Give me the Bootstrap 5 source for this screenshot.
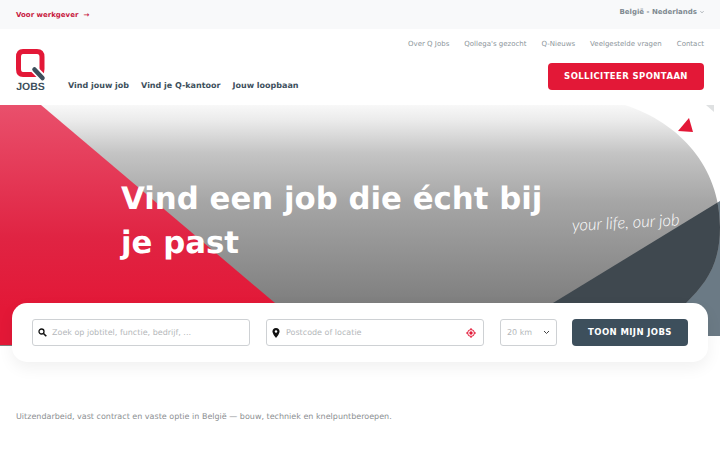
<!DOCTYPE html>
<html lang="nl">
<head>
<meta charset="utf-8">
<title>Q Jobs</title>
<link href="https://cdn.jsdelivr.net/npm/bootstrap@5.3.0/dist/css/bootstrap.min.css" rel="stylesheet">
<style>
html,body{height:450px;overflow:hidden}
body{font-family:"DejaVu Sans",sans-serif;background:#fff;color:#3d4f5c;text-rendering:geometricPrecision}
.topstrip{height:29px;background:#f8f9fa;padding:0 16px}
.emp-link{font-size:7px;font-weight:700;color:#c8193f;text-decoration:none;margin-top:1px}
.emp-link span{margin-left:5px}
.lang-link{font-size:7px;font-weight:700;color:#808a91;text-decoration:none;margin-top:-5px;gap:3px}
.mainhead{height:76px;padding:0 16px}
.logo-wrap{width:30px;margin-top:20px}
.meta-nav{gap:15px;padding-top:10px}
.meta-nav a{font-size:7px;color:#8c959b;text-decoration:none}
.prime-nav{gap:12px;margin:51px 0 0 22px}
.prime-nav a{font-size:8px;font-weight:700;color:#3d4f5c;text-decoration:none}
.btn-apply{background:#e31837;color:#fff;font-size:8.5px;font-weight:700;letter-spacing:.4px;padding:0;width:156px;height:27px;border:0;border-radius:4px;margin-top:13px}
.hero-area{height:241px}
.hero-art{left:0;top:0;width:720px;height:241px}
.hero-title{font-size:30.8px;line-height:44px;font-weight:700;color:#fff;padding:72px 0 0 121px;width:560px;margin:0;position:relative}
.tagline{left:572px;top:108px;font-family:"Lato",sans-serif;font-style:italic;font-weight:300;font-size:16.5px;line-height:24px;color:#fff;white-space:nowrap;transform:rotate(-3deg);transform-origin:left center}
.search-shell{margin:-43px 12px 0;height:59px;background:#fff;border-radius:15px;box-shadow:0 6px 16px rgba(0,0,0,.06);padding:16px 20px 0;gap:16px;position:relative}
.field-box{flex:none;height:27px;border:1px solid #ced1d4;border-radius:3px;font-size:8px;color:#b4b7ba;padding:0 5px;gap:5px}
.field-box span{padding-top:1px}
.field-a,.field-b{width:218px}
.field-b{padding-right:7px;gap:6px}
.field-c{width:57px;padding:0 6px}
.btn-find{flex:none;background:#3d4f5c;color:#fff;font-size:8.5px;font-weight:700;letter-spacing:.4px;width:116px;height:27px;border:0;border-radius:4px;padding:0;margin-left:-1px}
.intro-line{font-size:8px;color:#8c8f92;margin:0;padding:49px 16px 0}
</style>
</head>
<body>
<div class="topstrip d-flex justify-content-between align-items-center">
  <a class="emp-link" href="#">Voor werkgever<span>→</span></a>
  <a class="lang-link d-flex align-items-center" href="#">België - Nederlands
    <svg width="4" height="4" viewBox="0 0 5 4"><path d="M.5 1 2.500 3 4.500 1" fill="none" stroke="#808a91" stroke-width=".8"/></svg></a>
</div>
<header class="mainhead d-flex justify-content-between">
  <div class="d-flex">
    <a class="logo-wrap d-block" href="#" aria-label="Q Jobs">
      <svg width="30" height="46" viewBox="0 0 30 46">
        <path d="M7 2.500H21Q26 2.500 26 8V20Q26 25.500 21 25.500H7Q2.500 25.500 2.500 20V8Q2.500 2.500 7 2.500Z" fill="none" stroke="#e31837" stroke-width="5"/>
        <path d="M18 20 27 29" stroke="#fff" stroke-width="8"/>
        <path d="M18.500 20.500 26.500 29" stroke="#3d4f5c" stroke-width="4.500" stroke-linecap="round"/>
        <text x="14.500" y="41" text-anchor="middle" font-family="Liberation Sans,sans-serif" font-weight="700" font-size="10.500" fill="#3d4f5c">JOBS</text>
      </svg>
    </a>
    <nav class="prime-nav d-flex align-items-start">
      <a href="#">Vind jouw job</a><a href="#">Vind je Q-kantoor</a><a href="#">Jouw loopbaan</a>
    </nav>
  </div>
  <div class="d-flex flex-column align-items-end">
    <nav class="meta-nav d-flex">
      <a href="#">Over Q Jobs</a><a href="#">Qollega's gezocht</a><a href="#">Q-Nieuws</a><a href="#">Veelgestelde vragen</a><a href="#">Contact</a>
    </nav>
    <button class="btn btn-apply" type="button">SOLLICITEER SPONTAAN</button>
  </div>
</header>
<section class="hero-area position-relative">
  <svg class="hero-art position-absolute" viewBox="0 0 720 241" preserveAspectRatio="none" aria-hidden="true">
    <defs>
      <linearGradient id="gr" x1="0" y1="0" x2="0" y2="1"><stop offset="0" stop-color="#f8f8f8"/><stop offset=".06" stop-color="#ececec"/><stop offset=".2" stop-color="#c4c4c4"/><stop offset=".4" stop-color="#a6a6a6"/><stop offset=".82" stop-color="#7f7f7f"/></linearGradient>
      <linearGradient id="rd" x1="0" y1="0" x2="0" y2="1"><stop offset="0" stop-color="#e9506c"/><stop offset=".55" stop-color="#e02443"/><stop offset=".85" stop-color="#e31837"/></linearGradient>
      <clipPath id="blob"><path d="M0 0H625C680 18 720 62 720 122C720 160 706 178 686 198L660 241H0Z"/></clipPath>
    </defs>
    <path d="M553 198 720 96V231H553Z" fill="#6b7a85"/>
    <g clip-path="url(#blob)">
      <rect width="720" height="241" fill="url(#gr)"/>
      <path d="M553 198 720 96V241H553Z" fill="#3f484f"/>
    </g>
    <path d="M0 0H41L275 198V240H0Z" fill="url(#rd)"/>
    <path d="M678 26 689 13 693 27Z" fill="#e31837"/>
    <path d="M706 0H714V7Z" fill="#dfe1e2"/>
  </svg>
  <h1 class="hero-title">Vind een job die écht bij je past</h1>
  <span class="tagline position-absolute">your life, our job</span>
</section>
<form class="search-shell d-flex">
  <div class="field-box field-a d-flex align-items-center">
    <svg width="9" height="9" viewBox="0 0 9 9"><circle cx="3.500" cy="3.500" r="2.500" fill="none" stroke="#111" stroke-width="1.300"/><path d="M5.500 5.500 8.300 8.300" stroke="#111" stroke-width="1.600"/></svg>
    <span>Zoek op jobtitel, functie, bedrijf, ...</span>
  </div>
  <div class="field-box field-b d-flex align-items-center">
    <svg width="8" height="10" viewBox="0 0 8 10"><path d="M4 0C1.800 0 .5 1.500.5 3.500.5 6 4 10 4 10S7.500 6 7.500 3.500C7.500 1.500 6.200 0 4 0Z" fill="#111"/><circle cx="4" cy="3.500" r="1.200" fill="#fff"/></svg>
    <span class="flex-grow-1">Postcode of locatie</span>
    <svg width="10" height="10" viewBox="0 0 10 10"><circle cx="5" cy="5" r="3.400" fill="none" stroke="#e31837"/><circle cx="5" cy="5" r="1.700" fill="#e31837"/><path d="M5 0V2M5 8V10M0 5H2M8 5H10" stroke="#e31837"/></svg>
  </div>
  <div class="field-box field-c d-flex align-items-center justify-content-between">
    <span>20 km</span>
    <svg width="7" height="5" viewBox="0 0 7 5"><path d="M1 1 3.500 3.500 6 1" fill="none" stroke="#444" stroke-width="1"/></svg>
  </div>
  <button class="btn btn-find" type="button">TOON MIJN JOBS</button>
</form>
<p class="intro-line">Uitzendarbeid, vast contract en vaste optie in België — bouw, techniek en knelpuntberoepen.</p>
<script src="https://cdn.jsdelivr.net/npm/bootstrap@5.3.0/dist/js/bootstrap.bundle.min.js"></script>
</body>
</html>
